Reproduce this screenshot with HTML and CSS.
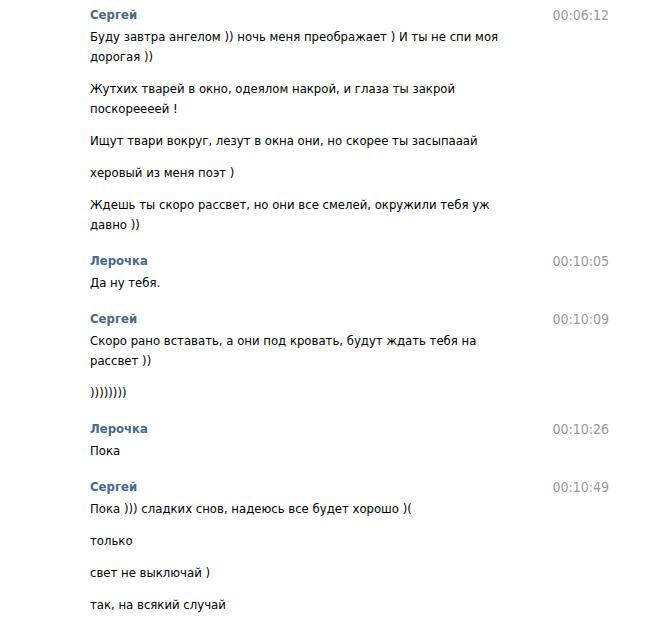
FILE: index.html
```html
<!DOCTYPE html>
<html lang="ru">
<head>
<meta charset="utf-8">
<title>Сообщения</title>
<link rel="stylesheet" href="styles.css">
</head>
<body>
<main class="history">
  <section class="group">
    <header class="head"><span class="name">Сергей</span><span class="time">00:06:12</span></header>
    <div class="body">
      <p>Буду завтра ангелом )) ночь меня преображает ) И ты не спи моя дорогая ))</p>
      <p>Жутхих тварей в окно, одеялом накрой, и глаза ты закрой поскореееей !</p>
      <p>Ищут твари вокруг, лезут в окна они, но скорее ты засыпааай</p>
      <p>херовый из меня поэт )</p>
      <p>Ждешь ты скоро рассвет, но они все смелей, окружили тебя уж давно ))</p>
    </div>
  </section>
  <section class="group">
    <header class="head"><span class="name">Лерочка</span><span class="time">00:10:05</span></header>
    <div class="body">
      <p>Да ну тебя.</p>
    </div>
  </section>
  <section class="group">
    <header class="head"><span class="name">Сергей</span><span class="time">00:10:09</span></header>
    <div class="body">
      <p>Скоро рано вставать, а они под кровать, будут ждать тебя на рассвет ))</p>
      <p>))))))))</p>
    </div>
  </section>
  <section class="group">
    <header class="head"><span class="name">Лерочка</span><span class="time">00:10:26</span></header>
    <div class="body">
      <p>Пока</p>
    </div>
  </section>
  <section class="group">
    <header class="head"><span class="name">Сергей</span><span class="time">00:10:49</span></header>
    <div class="body">
      <p>Пока ))) сладких снов, надеюсь все будет хорошо )(</p>
      <p>только</p>
      <p>свет не выключай )</p>
      <p>так, на всякий случай</p>
    </div>
  </section>
</main>
</body>
</html>
```
FILE: styles.css
```css
html, body {
  margin: 0;
  background: #fff;
}
body {
  font-family: "DejaVu Sans Condensed", "DejaVu Sans", sans-serif;
  font-size: 13px;
  line-height: 20px;
  color: #000;
}
.history {
  padding: 5px 43px 0 90px;
  display: flex;
  flex-direction: column;
  gap: 16px;
}
.head {
  display: flex;
  justify-content: space-between;
  align-items: center;
  height: 20px;
  margin-bottom: 2px;
}
.name {
  font-weight: bold;
  color: #45688e;
}
.time {
  font-size: 14px;
  line-height: 20px;
  color: #999;
}
.body {
  max-width: 435px;
  display: flex;
  flex-direction: column;
  gap: 12px;
}
.body p {
  margin: 0;
}
```
